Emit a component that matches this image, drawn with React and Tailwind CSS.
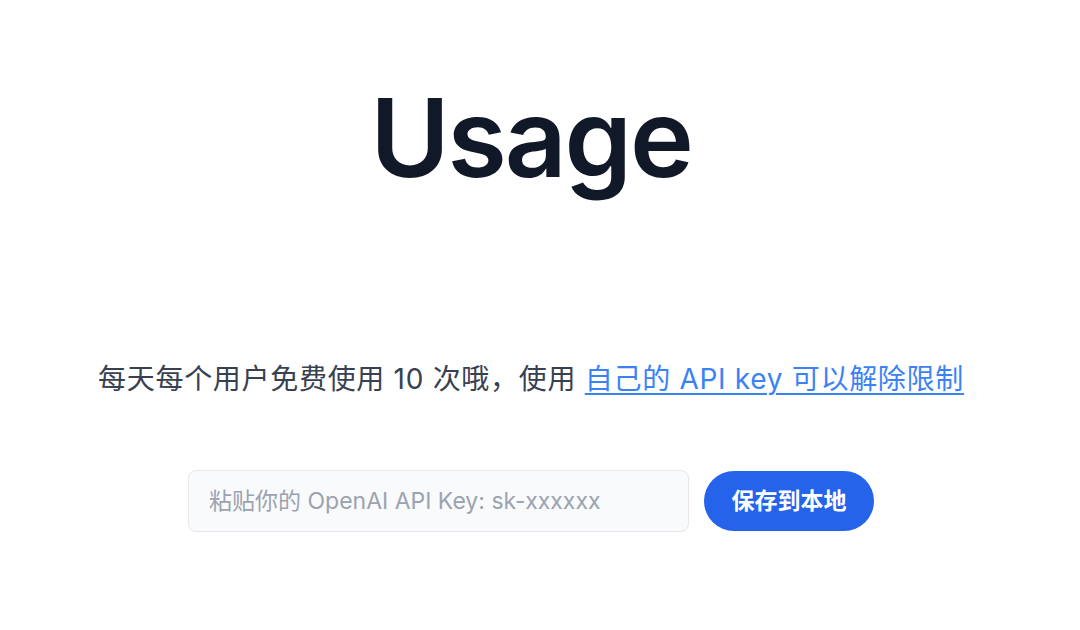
export default function App() {
  const font = { fontFamily: 'Inter, "Noto Sans CJK SC", sans-serif' };
  return (
    <div className="w-[1080px] h-[630px] bg-white flex flex-col items-center pr-[18px]" style={font}>
      <h1 className="mt-[68px] text-[108px] leading-[140px] font-semibold tracking-[-0.02em] text-[#111827]">Usage</h1>
      <p className="mt-[152px] text-[28px] leading-[38px] text-[#374151] tracking-[0.025em]">
        每天每个用户免费使用 10 次哦，使用{" "}
        <a href="#" className="text-[#3b82f6] underline underline-offset-[4px] decoration-[2px]">自己的 API key 可以解除限制</a>
      </p>
      <div className="mt-[72px] flex items-center gap-[15px]">
        <input
          placeholder="粘贴你的 OpenAI API Key: sk-xxxxxx"
          className="w-[501px] h-[62px] rounded-lg border border-[#e5e7eb] bg-[#f8fafc] px-5 text-[23px] placeholder:text-[#9ca3af] outline-none"
          style={font}
        />
        <button className="w-[170px] h-[60px] rounded-full bg-[#2563eb] text-white text-[23px] font-bold">
          保存到本地
        </button>
      </div>
    </div>
  );
}
